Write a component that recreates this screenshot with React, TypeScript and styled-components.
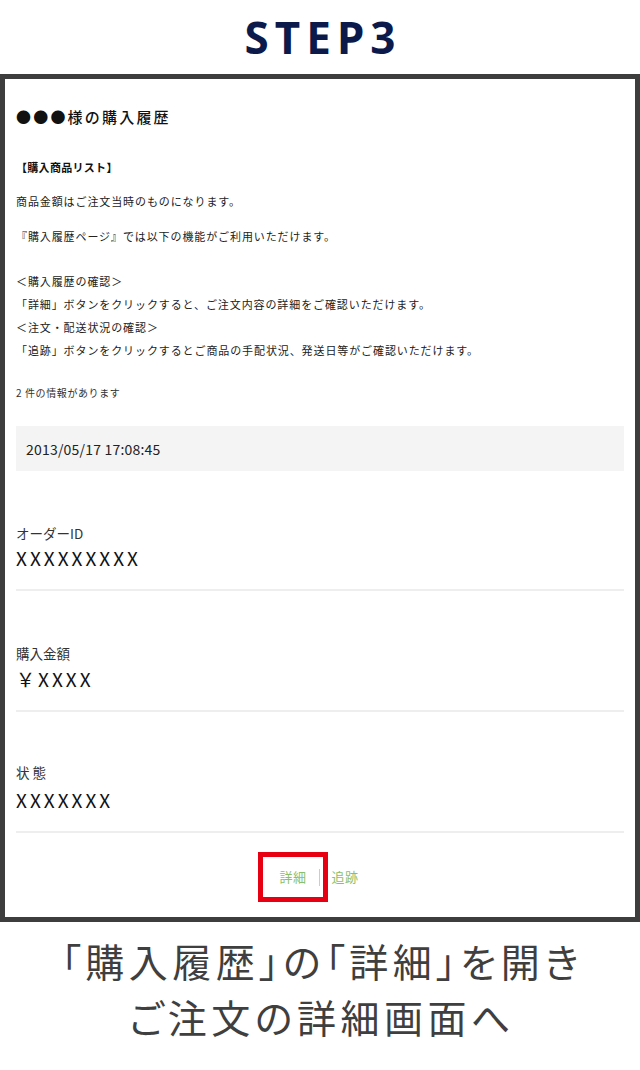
import React from "react";
import styled, { createGlobalStyle } from "styled-components";

const GlobalStyle = createGlobalStyle`
  html, body { margin: 0; padding: 0; background: #fff; }
  body { font-family: "Noto Sans CJK JP", "Noto Sans", sans-serif; color: #222; }
  * { box-sizing: border-box; }
`;

const Page = styled.div`
  width: 640px;
  display: flex;
  flex-direction: column;
`;

const Header = styled.header`
  height: 74px;
  display: flex;
  align-items: center;
  justify-content: center;
`;

const StepTitle = styled.h1`
  margin: 0;
  padding-left: 6px;
  font-family: "Noto Sans", "Inter", sans-serif;
  font-weight: 700;
  font-size: 44px;
  line-height: 1;
  letter-spacing: 6px;
  color: #0b1a4b;
`;

const Frame = styled.section`
  height: 848px;
  border: 5px solid #3d3d3d;
  padding: 28px 11px 28px;
  display: flex;
  flex-direction: column;
`;

const Title = styled.h2`
  margin: 0;
  font-size: 15px;
  font-weight: 500;
  line-height: 20px;
  letter-spacing: 2.2px;
  color: #111;
`;

const ListHead = styled.h3`
  margin: 30px 0 0;
  font-size: 11px;
  font-weight: 700;
  line-height: 20px;
  letter-spacing: 0.3px;
  color: #111;
`;

const Para = styled.p<{ $top: number }>`
  margin: ${(p) => p.$top}px 0 0;
  font-size: 11px;
  line-height: 20px;
  letter-spacing: 0.9px;
  color: #222;
`;

const Guide = styled.div`
  margin-top: 24px;
  font-size: 11px;
  line-height: 23px;
  letter-spacing: 0.9px;
  color: #222;
`;

const Count = styled.p`
  margin: 21px 0 0;
  font-size: 10px;
  line-height: 20px;
  letter-spacing: 0.6px;
  color: #333;
`;

const DateBar = styled.div`
  margin-top: 23px;
  height: 45px;
  background: #f4f4f4;
  display: flex;
  align-items: center;
  padding-left: 10px;
  font-size: 14px;
  color: #222;
  letter-spacing: 0.2px;
`;

const Item = styled.div<{ $top: number; $gap: number }>`
  padding-top: ${(p) => p.$top}px;
  padding-bottom: 19px;
  border-bottom: 2px solid #eeeeee;
  display: flex;
  flex-direction: column;
  gap: ${(p) => p.$gap}px;
`;

const Label = styled.div`
  font-size: 13.5px;
  line-height: 20px;
  color: #333;
`;

const Value = styled.div`
  font-size: 19px;
  font-weight: 400;
  line-height: 24px;
  letter-spacing: 3px;
  color: #111;
`;

const Links = styled.div`
  margin-top: 34px;
  display: flex;
  justify-content: center;
  align-items: center;
  gap: 12px;
  padding-right: 2px;
`;

const LinkText = styled.a`
  position: relative;
  font-size: 13px;
  line-height: 20px;
  color: #8bbf6a;
  text-decoration: none;
  letter-spacing: 0.5px;
`;

const Separator = styled.span`
  width: 1px;
  height: 17px;
  background: #cccccc;
`;

const Highlight = styled.span`
  position: absolute;
  left: -21px;
  top: -15px;
  width: 70px;
  height: 50px;
  border: 5px solid #e60012;
`;

const Caption = styled.p`
  margin: 10px 0 0;
  padding-left: 4px;
  text-align: center;
  font-size: 39px;
  font-weight: 400;
  line-height: 56px;
  letter-spacing: 4.5px;
  color: #3f3f3f;
  font-feature-settings: "palt";
`;

export default function App() {
  return (
    <Page>
      <GlobalStyle />
      <Header>
        <StepTitle>STEP3</StepTitle>
      </Header>
      <Frame>
        <Title>●●●様の購入履歴</Title>
        <ListHead>【購入商品リスト】</ListHead>
        <Para $top={14}>商品金額はご注文当時のものになります。</Para>
        <Para $top={15}>『購入履歴ページ』では以下の機能がご利用いただけます。</Para>
        <Guide>
          <div>＜購入履歴の確認＞</div>
          <div>「詳細」ボタンをクリックすると、ご注文内容の詳細をご確認いただけます。</div>
          <div>＜注文・配送状況の確認＞</div>
          <div>「追跡」ボタンをクリックするとご商品の手配状況、発送日等がご確認いただけます。</div>
        </Guide>
        <Count>2 件の情報があります</Count>
        <DateBar>2013/05/17 17:08:45</DateBar>
        <Item $top={52} $gap={3}>
          <Label>オーダーID</Label>
          <Value>XXXXXXXXX</Value>
        </Item>
        <Item $top={52} $gap={4}>
          <Label>購入金額</Label>
          <Value>￥XXXX</Value>
        </Item>
        <Item $top={50} $gap={6}>
          <Label>状 態</Label>
          <Value>XXXXXXX</Value>
        </Item>
        <Links>
          <LinkText href="#">
            詳細
            <Highlight />
          </LinkText>
          <Separator />
          <LinkText href="#">追跡</LinkText>
        </Links>
      </Frame>
      <Caption>
        「購入履歴」の「詳細」を開き
        <br />
        ご注文の詳細画面へ
      </Caption>
    </Page>
  );
}
